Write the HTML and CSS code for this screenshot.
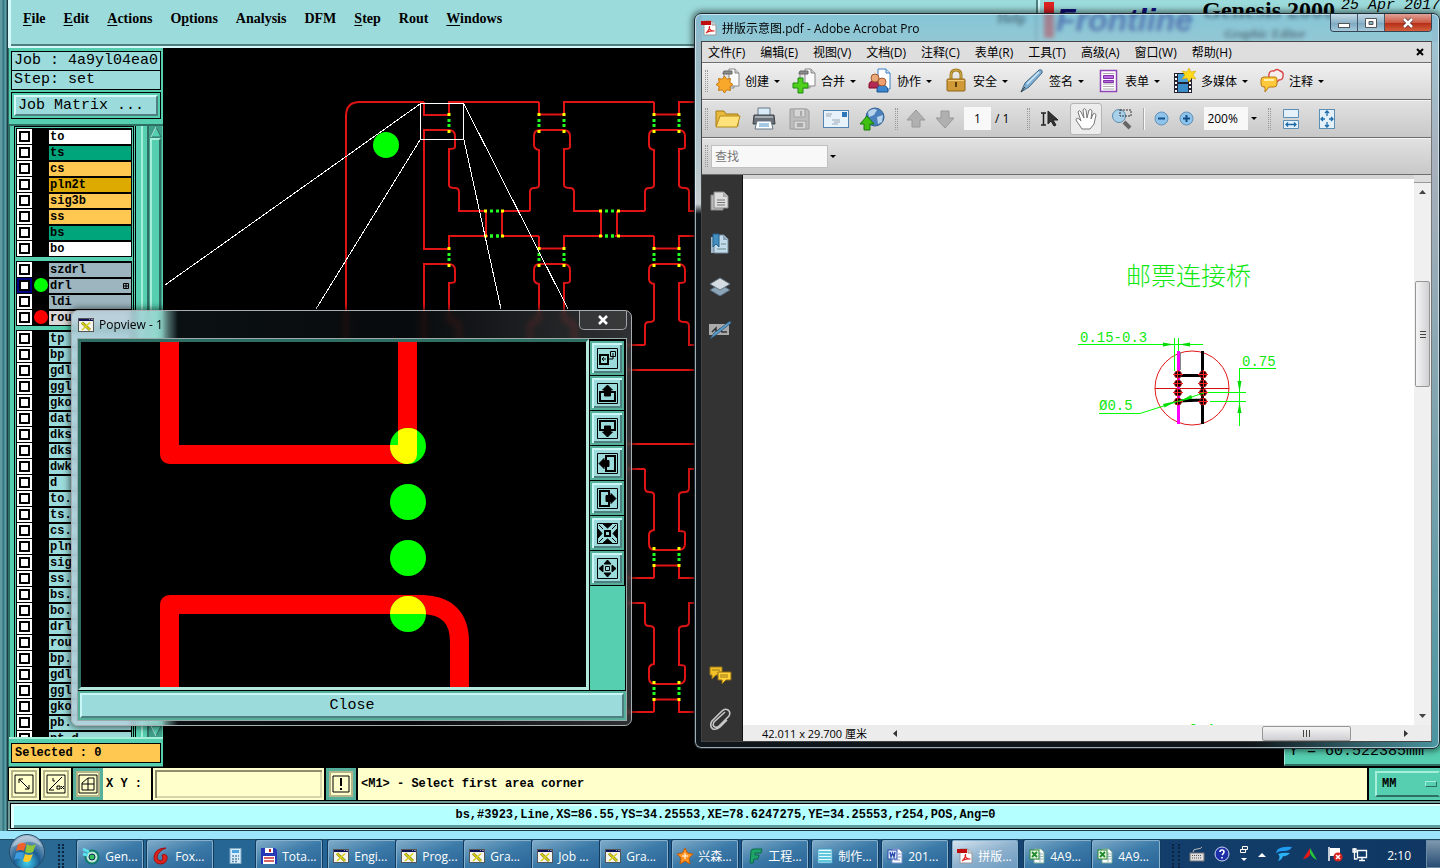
FILE: index.html
```html
<!DOCTYPE html>
<html lang="zh-CN">
<head>
  <meta charset="UTF-8" />
  <meta name="viewport" content="width=device-width, initial-scale=1.0"/>
  <title>Genesis 2000 - Graphic Editor</title>
  <link rel="stylesheet" href="styles.css">
</head>
<body>

  <!-- shared shapes -->
  <svg class="defs" width="0" height="0" aria-hidden="true">
    <symbol id="xwin" viewBox="0 0 16 14">
      <rect width="16" height="14" fill="#f4f4ec"/>
      <rect width="16" height="3" fill="#101058"/>
      <path d="M11 1h1M13 1h2" stroke="#fff"/>
      <rect x=".5" y=".5" width="15" height="13" fill="none" stroke="#555"/>
      <path d="M4 4.500L12 12" stroke="#8a8a10" stroke-width="3"/>
      <path d="M4 4.500L12 12M12 4.500L4 12" stroke="#d8d020" stroke-width="1.600"/>
    </symbol>
    <symbol id="pdf" viewBox="0 0 16 16">
      <path d="M3 1h8l4 4v10H3z" fill="#fff" stroke="#999"/>
      <path d="M11 1v4h4" fill="#ddd" stroke="#999"/>
      <path d="M0 1h10v4H0z" fill="#c00d0d"/>
      <path d="M5 13c2-1 4-5 3.500-7M8 7c.5 3 3 4 5.500 4M5.500 12.500c2-1.500 5-2 8-1.500" fill="none" stroke="#d22" stroke-width="1.200"/>
    </symbol>
    <symbol id="xls" viewBox="0 0 16 16">
      <path d="M5 1h7l3 3v11H5z" fill="#fff" stroke="#7a9"/>
      <path d="M7 6h7M7 8.500h7M7 11h7M11 4v10" stroke="#9bb"/>
      <rect x="1" y="2" width="9" height="9" fill="#e8f6e4" stroke="#2d8a36"/>
      <path d="M3 4l5 5M8 4L3 9" stroke="#1f8a2a" stroke-width="1.800"/>
    </symbol>
    <symbol id="sheets" viewBox="0 0 24 26">
      <path d="M8 5h10v15H8z" fill="#e4e4e4" stroke="#888"/>
      <path d="M13 1h6l4 4v13H13z" fill="#fafafa" stroke="#888"/>
      <path d="M19 1v4h4" fill="#ccc" stroke="#888"/>
      <path d="M7 5l1-2h8v3H7z" fill="#8c8c8c" stroke="#666"/>
    </symbol>
  </svg>

  <div class="desktop">

    <main class="genesis">
      <header class="gen-top">
        <nav class="gen-menu">
          <button><u>F</u>ile</button>
          <button><u>E</u>dit</button>
          <button><u>A</u>ctions</button>
          <button>O<u>p</u>tions</button>
          <button>Analysis</button>
          <button>DFM</button>
          <button><u>S</u>tep</button>
          <button>Rout</button>
          <button><u>W</u>indows</button>
          <button class="help">Help</button>
        </nav>
        <div class="brand">
          <div class="logo"><b></b>Frontline</div>
          <div class="product">Genesis 2000<small>Graphic Editor</small></div>
          <div class="date">25 Apr 2017</div>
        </div>
      </header>

      <div class="gen-body">
        <aside class="side">
          <div class="info">
            <div>Job : 4a9yl04ea0</div>
            <div>Step: set</div>
          </div>
          <div class="matrix"><button>Job Matrix ...</button></div>
          <div class="layer-area">
            <div class="layers">
              <div class="group">
                <label class="row"><input type="checkbox"><i></i><span class="white">to</span></label>
                <label class="row"><input type="checkbox"><i></i><span class="green">ts</span></label>
                <label class="row"><input type="checkbox"><i></i><span class="amber">cs</span></label>
                <label class="row"><input type="checkbox"><i></i><span class="gold">pln2t</span></label>
                <label class="row"><input type="checkbox"><i></i><span class="amber">sig3b</span></label>
                <label class="row"><input type="checkbox"><i></i><span class="amber">ss</span></label>
                <label class="row"><input type="checkbox"><i></i><span class="green">bs</span></label>
                <label class="row"><input type="checkbox"><i></i><span class="white">bo</span></label>
              </div>
              <div class="group">
                <label class="row"><input type="checkbox"><i></i><span class="steel">szdrl</span></label>
                <label class="row"><input type="checkbox" class="work"><i class="dot-green"></i><span class="steel">drl<svg width="6" height="6"><path d="M.5.5h5v5h-5zM3 0v6M0 3h6" fill="none" stroke="#000"/></svg></span></label>
                <label class="row"><input type="checkbox"><i></i><span class="steel">ldi</span></label>
                <label class="row"><input type="checkbox"><i class="dot-red"></i><span class="grey">rou</span></label>
              </div>
              <div class="group">
                <label class="row"><input type="checkbox"><i></i><span>tp</span></label>
                <label class="row"><input type="checkbox"><i></i><span>bp</span></label>
                <label class="row"><input type="checkbox"><i></i><span>gdl</span></label>
                <label class="row"><input type="checkbox"><i></i><span>ggl</span></label>
                <label class="row"><input type="checkbox"><i></i><span>gko</span></label>
                <label class="row"><input type="checkbox"><i></i><span>dat</span></label>
                <label class="row"><input type="checkbox"><i></i><span>dks</span></label>
                <label class="row"><input type="checkbox"><i></i><span>dks</span></label>
                <label class="row"><input type="checkbox"><i></i><span>dwk</span></label>
                <label class="row"><input type="checkbox"><i></i><span>d</span></label>
                <label class="row"><input type="checkbox"><i></i><span>to.</span></label>
                <label class="row"><input type="checkbox"><i></i><span>ts.</span></label>
                <label class="row"><input type="checkbox"><i></i><span>cs.</span></label>
                <label class="row"><input type="checkbox"><i></i><span>pln</span></label>
                <label class="row"><input type="checkbox"><i></i><span>sig</span></label>
                <label class="row"><input type="checkbox"><i></i><span>ss.</span></label>
                <label class="row"><input type="checkbox"><i></i><span>bs.</span></label>
                <label class="row"><input type="checkbox"><i></i><span>bo.</span></label>
                <label class="row"><input type="checkbox"><i></i><span>drl</span></label>
                <label class="row"><input type="checkbox"><i></i><span>rou</span></label>
                <label class="row"><input type="checkbox"><i></i><span>bp.</span></label>
                <label class="row"><input type="checkbox"><i></i><span>gdl</span></label>
                <label class="row"><input type="checkbox"><i></i><span>ggl</span></label>
                <label class="row"><input type="checkbox"><i></i><span>gko</span></label>
                <label class="row"><input type="checkbox"><i></i><span>pb.</span></label>
                <label class="row"><input type="checkbox"><i></i><span>pt.d</span></label>
              </div>
            </div>
            <div class="rail"></div>
            <div class="motif-scroll">
              <svg width="12" height="12"><path d="M6 1L11 11H1z" fill="#55cfb0" stroke="#2f6e63"/><path d="M6 1L1 11" stroke="#b5f5e4"/></svg>
              <div class="thumb"></div>
              <svg width="12" height="12"><path d="M6 11L11 1H1z" fill="#55cfb0" stroke="#2f6e63"/><path d="M1 1L6 11" stroke="#b5f5e4"/></svg>
            </div>
          </div>
          <div class="selected"><div>Selected : 0</div></div>
        </aside>

        <div class="canvas">
          <svg width="100%" height="100%" role="img" aria-label="PCB panel">
            <defs>
              <g id="col">
                <path d="M539 102V114.500H564V102H654M530 211V192Q530 188 534 188Q539 188 539 185V150Q534 149 534 145V136Q534 130 540 130H563Q570 130 570 136V147Q570 149 564 149V185Q564 188 570 188Q574 188 574 192V211H600M618 211H645M601 211V236M617 211V236"/>
                <path class="tab-end" d="M539 113v3M564 113v3M539 130v3M564 130v3"/>
                <path class="tab-hole" d="M539 119v3M564 119v3M539 124v3M564 124v3"/>
              </g>
              <g id="band">
                <path d="M424 102V115H449V102H539M424 249V130H448Q455 130 455 136V147Q455 149 449 149V185Q449 188 455 188Q459 188 459 192V211H486M503 211H530M486 211V236M502 211V236"/>
                <path class="tab-end" d="M449 113v3M449 130v3"/>
                <path class="tab-hole" d="M449 119v3M449 124v3"/>
                <use href="#col"/>
                <use href="#col" x="115"/>
                <use href="#col" x="230"/>
              </g>
              <g id="links">
                <path class="tab-end" d="M484 211h3M501 211h3M599 211h3M617 211h3M484 236h3M501 236h3M599 236h3M617 236h3"/>
                <path class="tab-hole" d="M490 211h3M496 211h3M605 211h3M611 211h3M490 236h3M496 236h3M605 236h3M611 236h3"/>
              </g>
              <g id="half">
                <use href="#band"/>
                <use href="#band" y="134"/>
                <use href="#links"/>
                <path d="M424 370H960"/>
              </g>
            </defs>
            <g transform="translate(-163 -48)">
              <g class="rout">
                <path d="M346 700V116Q346 102 360 102H424"/>
                <use href="#half"/>
                <use href="#half" transform="matrix(1 0 0 -1 0 814)"/>
              </g>
              <!-- bridge openings between the first and second row -->
              <path class="gap" d="M488 236h13M603 236h12"/>
              <path class="tab-hole" d="M490 236h3M496 236h3M605 236h3M611 236h3"/>
              <circle cx="386" cy="145" r="13" fill="#0f0"/>
              <path class="view" d="M420.500 103.500H463.500V139.500H420.500zM420 104L165 285M420 140L316 309M464 140L501 309M464 104L568 309"/>
            </g>
          </svg>
          <div class="coords">Y = 60.522385mm</div>
        </div>
      </div>

      <footer class="command">
        <button class="tool" aria-label="Area"><svg width="20" height="20" viewBox="0 0 20 20"><path d="M1 1h18v18H1zM5 5l10 10M5 9V5h4M11 15h4v-4" /></svg></button>
        <button class="tool" aria-label="Angle"><svg width="20" height="20" viewBox="0 0 20 20"><path d="M1 1h18v18H1zM3 16L16 3M3 16h5M7 4v3h2M11 12h3v3h-3zM18 12l-3 3M15 12l3 3"/></svg></button>
        <button class="tool on" aria-label="Grid"><svg width="20" height="20" viewBox="0 0 20 20"><path d="M1 1h18v18H1zM10 4h6v12H4v-7zM10 4v12M4 10h12"/></svg></button>
        <label class="xy" for="xy">X Y :</label>
        <input id="xy" type="text">
        <button class="tool on" aria-label="Alert"><svg width="20" height="20" viewBox="0 0 20 20"><path d="M2 2h16v16H2z"/><path d="M10 4v8M10 14v2" stroke-width="2"/></svg></button>
        <div class="message">&lt;M1&gt; - Select first area corner</div>
        <div class="unit"><button>MM<i></i></button></div>
      </footer>
      <div class="status"><div>bs,#3923,Line,XS=86.55,YS=34.25553,XE=78.6247275,YE=34.25553,r254,POS,Ang=0</div></div>
    </main>

    <section class="popview">
      <header class="pop-title">
        <svg width="16" height="14"><use href="#xwin"/></svg>
        <span>Popview - 1</span>
        <button aria-label="Close window"><svg width="12" height="10" viewBox="0 0 12 10"><path d="M2 1l8 8M10 1L2 9" stroke="#fff" stroke-width="2.500"/></svg></button>
      </header>
      <div class="pop-inner">
        <div class="pop-main">
          <div class="pop-canvas">
            <svg width="100%" height="100%" role="img" aria-label="Magnified rout and drill">
              <defs>
                <clipPath id="holes"><circle cx="408" cy="446" r="18"/><circle cx="408" cy="614" r="18"/></clipPath>
                <path id="trace" d="M169.500 340V454.500H407.500V340M169.500 700V604.500H423Q459.500 606 459.500 642V700"/>
              </defs>
              <g transform="translate(-81 -342)" fill="none" stroke-width="19" stroke-linejoin="round">
                <use href="#trace" stroke="#f00"/>
                <g fill="#0f0">
                  <circle cx="408" cy="446" r="18"/>
                  <circle cx="408" cy="502" r="18"/>
                  <circle cx="408" cy="558" r="18"/>
                  <circle cx="408" cy="614" r="18"/>
                </g>
                <g clip-path="url(#holes)"><use href="#trace" stroke="#ff0"/></g>
              </g>
            </svg>
          </div>
          <div class="pop-tools">
            <button aria-label="Zoom area"><svg viewBox="0 0 21 21"><path d="M.5.5h20v20H.5zM13.500 3.500h5v5h-5zM16 5v6h-4M9 11H5M7 9l-2 2 2 2"/><path d="M3 7h8v9H3z" stroke-width="2"/></svg></button>
            <button aria-label="Pan up"><svg viewBox="0 0 21 21"><path d="M.5.5h20v20H.5z"/><path d="M7 9H3v9h15V9h-4" stroke-width="2"/><path d="M10.500 2l5 5h-2v6h-6V7h-2z" fill="#000"/></svg></button>
            <button aria-label="Pan down"><svg viewBox="0 0 21 21"><path d="M.5.5h20v20H.5z"/><path d="M7 12H3V3h15v9h-4" stroke-width="2"/><path d="M10.500 19l5-5h-2V8h-6v6h-2z" fill="#000"/></svg></button>
            <button aria-label="Pan left"><svg viewBox="0 0 21 21"><path d="M.5.5h20v20H.5z"/><path d="M9 7V3h9v15H9v-4" stroke-width="2"/><path d="M2 10.500l5-5v2h5v6H7v2z" fill="#000"/></svg></button>
            <button aria-label="Pan right"><svg viewBox="0 0 21 21"><path d="M.5.5h20v20H.5z"/><path d="M12 7V3H3v15h9v-4" stroke-width="2"/><path d="M19 10.500l-5-5v2H9v6h5v2z" fill="#000"/></svg></button>
            <button aria-label="Zoom in"><svg viewBox="0 0 21 21"><path d="M.5.5h20v20H.5zM2 2l4 4M19 2l-4 4M2 19l4-4M19 19l-4-4"/><path d="M8 8h5v5H8z" stroke-width="2"/><path d="M6 1h9l-4.500 4zM6 20h9l-4.500-4zM1 6v9l4-4.500zM20 6v9l-4-4.500z" fill="#000"/></svg></button>
            <button aria-label="Zoom out"><svg viewBox="0 0 21 21"><path d="M.5.5h20v20H.5z"/><path d="M8.500 8.500h4v4h-4z"/><path d="M7 6h7l-3.500-4zM7 15h7l-3.500 4zM6 7v7l-4-3.500zM15 7v7l4-3.500z" fill="#000"/></svg></button>
          </div>
        </div>
        <div class="pop-close"><button>Close</button></div>
      </div>
    </section>

    <section class="acrobat">
      <header class="acro-title">
        <svg width="16" height="16"><use href="#pdf"/></svg>
        <h1>拼版示意图.pdf - Adobe Acrobat Pro</h1>
        <div class="caption">
          <button aria-label="Minimize"><svg width="14" height="12"><rect x="1.500" y="6.500" width="11" height="4" fill="#fff" stroke="#555"/></svg></button>
          <button aria-label="Restore"><svg width="14" height="12"><path d="M1.500 1.500h11v9h-11zM5 4.500h4v3H5z" fill="#fff" fill-rule="evenodd" stroke="#555"/></svg></button>
          <button class="red" aria-label="Close"><svg width="14" height="12"><path d="M3 2l8 8M11 2l-8 8" stroke="#533" stroke-width="4"/><path d="M3 2l8 8M11 2l-8 8" stroke="#fff" stroke-width="2.500"/></svg></button>
        </div>
      </header>
      <div class="acro-inner">
        <nav class="acro-menu">
          <button>文件(F)</button>
          <button>编辑(E)</button>
          <button>视图(V)</button>
          <button>文档(D)</button>
          <button>注释(C)</button>
          <button>表单(R)</button>
          <button>工具(T)</button>
          <button>高级(A)</button>
          <button>窗口(W)</button>
          <button>帮助(H)</button>
          <button class="doc-close" aria-label="Close document"><svg width="8" height="8"><path d="M1 1l6 6M7 1L1 7" stroke="#000" stroke-width="2"/></svg></button>
        </nav>

        <div class="bar tasks">
          <i class="grip"></i>
          <button><svg width="24" height="26" viewBox="0 0 24 26"><use href="#sheets"/><path d="M8.500 8l2.200 3.200 3.800-.7-.7 3.800L17 16.500l-3.200 2.200.7 3.800-3.800-.7L8.500 25l-2.200-3.200-3.800.7.7-3.800L0 16.500l3.200-2.200-.7-3.800 3.800.7z" fill="#f8a92c" stroke="#c87a10"/></svg>创建<b></b></button>
          <button><svg width="24" height="26" viewBox="0 0 24 26"><use href="#sheets"/><path d="M6 10h5v5h5v5h-5v5H6v-5H1v-5h5z" fill="#4fd01c" stroke="#1f8a10"/></svg>合并<b></b></button>
          <button><svg width="24" height="26" viewBox="0 0 24 26"><path d="M10 1h8l4 4v16H10z" fill="#fff" stroke="#3b7fc4"/><path d="M18 1v4h4" fill="#cfe2f4" stroke="#3b7fc4"/><path d="M1 17q0-4 5-4t5 4v3H1z" fill="#b02a55" stroke="#802"/><circle cx="7" cy="10" r="4" fill="#e8a878" stroke="#a05a30"/><path d="M9 22q0-5 5-5t6 5v2H9z" fill="#3d86d0" stroke="#1d5090"/><circle cx="14" cy="14" r="4" fill="#f0a070" stroke="#a05a30"/></svg>协作<b></b></button>
          <button><svg width="24" height="26" viewBox="0 0 24 26"><path d="M7 12V7q0-5 5-5t5 5v5" fill="none" stroke="#a07a20" stroke-width="3"/><path d="M7 12V7q0-5 5-5t5 5v5" fill="none" stroke="#d8b450"/><rect x="3" y="11" width="18" height="12" rx="1" fill="#d09a38" stroke="#8f6512"/><path d="M4 12.500h16" stroke="#f1cc78"/><path d="M12 14v5" stroke="#5c3d08" stroke-width="2"/></svg>安全<b></b></button>
          <button><svg width="24" height="26" viewBox="0 0 24 26"><path d="M1 24L5 15 19 2q4-1 3 3L9 19z" fill="#7fb0d8" stroke="#44687f"/><path d="M7 16L19 4" stroke="#d5ebfa" stroke-width="1.500"/><path d="M1 24l4-5" stroke="#333"/></svg>签名<b></b></button>
          <button><svg width="24" height="26" viewBox="0 0 24 26"><rect x="4.500" y="2.500" width="16" height="21" fill="#fff" stroke="#8f45b8" stroke-width="1.500"/><path d="M7 5.500h11M7 16h11M7 18.500h11M7 21h11" stroke="#aaa"/><path d="M7.500 7.500h10v3h-10zM7.500 12.500h10v2h-10z" fill="#b868e0" stroke="#8030a8"/></svg>表单<b></b></button>
          <button><svg width="24" height="26" viewBox="0 0 24 26"><rect x="2" y="5" width="18" height="20" fill="#223"/><rect x="6" y="6" width="10" height="8" fill="#4aa0d8"/><rect x="6" y="16" width="10" height="8" fill="#3a8cc8"/><path d="M4 6v18M18 6v18" stroke="#fff" stroke-width="2" stroke-dasharray="2 2"/><path d="M17 0l2 4 5-1-3 4 3 4-5-1-2 4-2-4-5 1 3-4-3-4 5 1z" fill="#ffd91c" stroke="#d8a800" stroke-width=".6"/></svg>多媒体<b></b></button>
          <button><svg width="24" height="26" viewBox="0 0 24 26"><path d="M9 6q1-4 5-3 3-3 6 0 4 1 3 5 0 4-4 4l-3 3 0-3h-4q-4-2-3-6z" fill="#f6eeee" stroke="#d84040" stroke-width="1.300"/><path d="M4 9h11q2 0 2 3v4q0 3-3 3H9l-4 5v-5H4q-3 0-3-3v-4q0-3 3-3z" fill="#ffc83a" stroke="#b87a10"/><path d="M4 12h10" stroke="#fff0b0" stroke-width="2"/></svg>注释<b></b></button>
        </div>

        <div class="bar tools">
          <i class="grip"></i>
          <div class="files">
            <button aria-label="打开"><svg width="26" height="24" viewBox="0 0 26 24"><path d="M1 19V4h8l2 3h12v12z" fill="#e8b93a" stroke="#a67c14"/><path d="M1 20L5 9h20l-3 11z" fill="#ffe27a" stroke="#b88a1a"/></svg></button>
            <button aria-label="打印"><svg width="26" height="24" viewBox="0 0 26 24"><path d="M7 1h12v8H7z" fill="#d8edf8" stroke="#678"/><path d="M3 8h20l1 9H2z" fill="#6a6f76" stroke="#3d4247"/><path d="M4 10h18" stroke="#a6acb3" stroke-width="2"/><path d="M6 14h14l2 8H4z" fill="#fff" stroke="#678"/><path d="M8 17h10M8 19h10" stroke="#4a90c8"/></svg></button>
            <button aria-label="保存"><svg width="26" height="24" viewBox="0 0 26 24"><path d="M3 2h17l2 2v18H3z" fill="#bdbdbd" stroke="#9c9c9c"/><path d="M7 2h11v8H7zM7 14h12v8H7z" fill="#d6d6d6" stroke="#a2a2a2"/><path d="M14 4v5M10 17h6M10 19h6" stroke="#999" stroke-width="1.500"/></svg></button>
            <button aria-label="电子邮件"><svg width="26" height="24" viewBox="0 0 26 24"><rect x=".5" y="3.500" width="25" height="17" fill="#e8f2fa" stroke="#5585ae"/><rect x="19" y="5" width="5" height="5" fill="#2c78b8"/><path d="M3 7h6M3 9h5M9 13h8M11 15h6M9 17h6" stroke="#99a9b5"/></svg></button>
            <button aria-label="上载"><svg width="26" height="24" viewBox="0 0 26 24"><circle cx="16" cy="10" r="9" fill="#4a80bc" stroke="#34608f"/><path d="M9 5q5-5 9-2l-3 5-5 2zM18 10l6-2-1 7-4 2z" fill="#b8d4ec"/><path d="M8 9l7 8h-4v6H5v-6H1z" fill="#3fc010" stroke="#187810"/></svg></button>
          </div>
          <i class="grip"></i>
          <div class="pages">
            <button aria-label="上一页"><svg width="20" height="20"><path d="M10 1l9 10h-5v7H6v-7H1z" fill="#b0b0b0" stroke="#999"/></svg></button>
            <button aria-label="下一页"><svg width="20" height="20"><path d="M10 19l9-10h-5V2H6v7H1z" fill="#b0b0b0" stroke="#999"/></svg></button>
            <input type="text" value="1" aria-label="页码"><span>/ 1</span>
          </div>
          <i class="grip"></i>
          <div class="select">
            <button aria-label="选择"><svg width="20" height="18" viewBox="0 0 20 18"><path d="M1 3h5M1 15h5M3.500 3v12" stroke="#222" stroke-width="1.500"/><path d="M8 1l10 9h-5l3 5-2 1-3-5-3 3z" fill="#333" stroke="#222"/></svg></button>
            <button class="active" aria-label="手形"><svg width="24" height="24" viewBox="0 0 24 24"><path d="M8 22L2 13q0-3 3-1l2 2-3-9q1-3 3 0l3 6-1-8q1-3 3 0l1 8 2-8q2-2 3 1l-1 8 2-5q2-2 3 1l-2 9-4 5z" fill="#fff" stroke="#777"/></svg></button>
            <button aria-label="选框缩放"><svg width="22" height="22" viewBox="0 0 22 22"><circle cx="8" cy="8" r="6.500" fill="#a8d0ea" stroke="#5b8bad"/><path d="M13 14l6 6" stroke="#666" stroke-width="4"/><path d="M9 2h11v6H9z" fill="none" stroke="#333" stroke-dasharray="2 1"/></svg></button>
          </div>
          <i class="line"></i>
          <div class="zoom">
            <button aria-label="缩小"><svg width="15" height="15"><circle cx="7.500" cy="7.500" r="6.500" fill="#8ec4ec" stroke="#6591b5"/><path d="M4 7.500h7" stroke="#135089" stroke-width="2"/></svg></button>
            <button aria-label="放大"><svg width="15" height="15"><circle cx="7.500" cy="7.500" r="6.500" fill="#8ec4ec" stroke="#6591b5"/><path d="M4 7.500h7M7.500 4v7" stroke="#135089" stroke-width="2"/></svg></button>
            <select aria-label="缩放比例"><option>200%</option></select>
          </div>
          <b></b>
          <i class="grip"></i>
          <div class="files">
            <button aria-label="适合宽度"><svg width="18" height="22" viewBox="0 0 18 22"><path d="M1.500 1.500h15v8h-15zM1.500 12.500h15v8h-15z" fill="#e4f1fa" stroke="#5d8fb5"/><path d="M4 16.500h10M6 14.500l-2 2 2 2M12 14.500l2 2-2 2" fill="none" stroke="#1d6caa" stroke-width="1.300"/></svg></button>
            <button aria-label="适合页面"><svg width="18" height="22" viewBox="0 0 18 22"><rect x="1.500" y="1.500" width="15" height="19" fill="#e4f1fa" stroke="#5d8fb5"/><path d="M9 3v5M9 14v5M3 11h4M11 11h4M7 5l2-2 2 2M7 17l2 2 2-2M5 9l-2 2 2 2M13 9l2 2-2 2" fill="none" stroke="#1d6caa" stroke-width="1.300"/></svg></button>
          </div>
        </div>

        <div class="bar find">
          <i class="grip"></i>
          <input type="text" placeholder="查找" aria-label="查找"><b></b>
        </div>

        <div class="acro-body">
          <aside class="acro-side">
            <button aria-label="页面"><svg width="22" height="22" viewBox="0 0 22 22"><path d="M2 5h12v15H2z" fill="#bbb" stroke="#888"/><path d="M5 2h10l4 4v12H5z" fill="#ddd" stroke="#888"/><path d="M14 2v5h5" fill="#aaa"/><path d="M8 10h8M8 12.500h8M8 15h8" stroke="#777"/></svg></button>
            <button aria-label="书签"><svg width="22" height="22" viewBox="0 0 22 22"><path d="M2 4h12v16H2z" fill="#9cb8c9"/><path d="M5 2h10l4 4v14H5z" fill="#c2dcec" stroke="#74889a"/><path d="M14 2v5h5" fill="#86a0b4"/><path d="M4 1h6v13l-3-3-3 3z" fill="#4390c0" stroke="#245f8a"/><path d="M12 11h5M8 16h9" stroke="#688"/></svg></button>
            <button aria-label="图层"><svg width="22" height="22" viewBox="0 0 22 22"><path d="M11 8l10 6-10 6-10-6z" fill="#8ba5b6" stroke="#536b7c"/><path d="M11 2l10 6-10 6L1 8z" fill="#d5dde2" stroke="#697b88"/></svg></button>
            <button aria-label="签名"><svg width="24" height="22" viewBox="0 0 24 22"><rect x="1" y="5" width="20" height="11" fill="#aaa"/><path d="M4 13l4-4v4l4-3 2 3h5" fill="none" stroke="#333" stroke-width="1.500"/><path d="M2 20l4-6L22 2l1 2L8 16z" fill="#5c9cc8" stroke="#28557a" stroke-width=".7"/></svg></button>
            <span></span>
            <button aria-label="注释"><svg width="24" height="22" viewBox="0 0 24 22"><path d="M2 3h12v8H8l-4 4v-4H2z" fill="#f0c02a" stroke="#9c7612"/><path d="M10 8h13v8h-5l-4 4v-4h-4z" fill="#ffd23a" stroke="#8c6810"/><path d="M4 6h8M12 11h8M12 13h8" stroke="#9c7612"/></svg></button>
            <button aria-label="附件"><svg width="24" height="24" viewBox="0 0 24 24"><path d="M17 5L6 15q-2 4 1 5 2 1 4-1L21 9q2-4-1-6-3-2-6 1L4 14q-3 5 1 8 4 1 7-2l7-7" fill="none" stroke="#c8c8c8" stroke-width="1.600"/></svg></button>
          </aside>
          <div class="doc">
            <div class="doc-row">
              <div class="page">
                <svg width="100%" height="100%" role="img" aria-label="邮票连接桥">
                  <g transform="translate(-743 -175)" fill="none" stroke="#0f0">
                    <g fill="#10e810" stroke="none" class="dims">
                      <text x="1126" y="285" class="dwg-title">邮票连接桥</text>
                      <text x="1080" y="342">0.15-0.3</text>
                      <text x="1242" y="366">0.75</text>
                      <text x="1099" y="410">Ø0.5</text>
                      <text x="1189" y="734">2.4</text>
                    </g>
                    <circle cx="1192" cy="388" r="37" stroke="#e01818"/>
                    <path d="M1155 388.500h74" stroke="#d01010"/>
                    <path d="M1178.500 351v73" stroke="#f0f" stroke-width="3"/>
                    <path d="M1202.500 351v73M1178 375.500h24M1178 401l24-1" stroke="#000" stroke-width="3"/>
                    <g fill="#000" stroke="#a01010">
                      <circle cx="1178" cy="374.500" r="3.500"/><circle cx="1178" cy="383.500" r="3.500"/><circle cx="1178" cy="392.500" r="3.500"/><circle cx="1178" cy="401.500" r="3.500"/>
                      <circle cx="1203" cy="374.500" r="3.500"/><circle cx="1203" cy="383.500" r="3.500"/><circle cx="1203" cy="392.500" r="3.500"/><circle cx="1203" cy="401.500" r="3.500"/>
                    </g>
                    <path d="M1173 374.500h10M1173 383.500h10M1173 392.500h10M1173 401.500h10M1198 374.500h10M1198 383.500h10M1198 392.500h10M1198 401.500h10M1177.500 370v9M1177.500 380v7M1177.500 389v7M1177.500 398v7M1203.500 370v9M1203.500 380v7M1203.500 389v7M1203.500 398v7" stroke="#f22"/>
                    <path d="M1078 344.500h125M1174.500 338v33M1178.500 338v13M1099 413.500h41L1204 393M1208 392.500h38M1210 401.500h36M1276 368.500h-36M1239.500 368v58"/>
                    <path d="M1163 342.500v4l11-2zM1190 342.500v4l-11-2zM1163 404l1.500 3.500 12-6.500zM1191 395l1.500 3.500-13 3zM1237.500 381h4l-2 11zM1237.500 413h4l-2-11z" fill="#0d0" stroke="none"/>
                    <path d="M1180.500 352v18" stroke="#888"/>
                  </g>
                </svg>
              </div>
              <div class="vscroll">
                <i class="split"></i>
                <svg width="7" height="4"><path d="M0 4h7L3.500 0z" fill="#444"/></svg>
                <div class="thumb"><svg width="8" height="8"><path d="M1 1.500h6M1 4.500h6M1 7.500h6" stroke="#444"/></svg></div>
                <svg width="7" height="4"><path d="M0 0h7L3.500 4z" fill="#444"/></svg>
              </div>
            </div>
            <div class="hscroll">
              <span>42.011 x 29.700 厘米</span>
              <svg width="4" height="7"><path d="M4 0v7L0 3.500z" fill="#333"/></svg>
              <div class="track"><div class="thumb"><svg width="9" height="7"><path d="M1.500 0v7M4.500 0v7M7.500 0v7" stroke="#444"/></svg></div></div>
              <svg width="4" height="7"><path d="M0 0v7l4-3.500z" fill="#333"/></svg>
            </div>
          </div>
        </div>
      </div>
    </section>

    <footer class="taskbar">
      <button class="start" aria-label="开始"><svg width="38" height="36" viewBox="0 0 38 36">
        <defs><radialGradient id="orb" cx=".5" cy=".8" r=".8"><stop offset="0" stop-color="#3fd0f0"/><stop offset=".45" stop-color="#1b5c92"/><stop offset="1" stop-color="#a9c0d0"/></radialGradient></defs>
        <circle cx="19" cy="18" r="17.500" fill="url(#orb)" stroke="#274a68"/>
        <path d="M10 10q4-3 8 0l-2 7q-4-2-8 0z" fill="#f0602a"/><path d="M19 10q4 3 9 0l-3 8q-4 2-8 0z" fill="#8dc63a"/><path d="M8 19q4-2 8 0l-2 7q-4-3-8 0z" fill="#3d9be0"/><path d="M17 20q4 2 8 0l-3 7q-4 2-7 0z" fill="#fdcb2a"/>
        <path d="M4 13Q8 3 19 2q11 1 15 11-8-6-15-5T4 13z" fill="#fff" opacity=".35"/></svg></button>
      <i class="dots"></i>
      <div class="apps">
        <button><svg width="18" height="18" viewBox="0 0 18 18"><circle cx="10" cy="10" r="6.500" fill="#bfe8d8" stroke="#0c7a68" stroke-width="2"/><circle cx="10" cy="10" r="3" fill="#35c060" stroke="#125"/><path d="M1 2l6 3M1 7l5 1" stroke="#5ce0f0" stroke-width="3"/></svg>Gen...</button>
        <button><svg width="18" height="18" viewBox="0 0 18 18"><path d="M14 1Q3 1 2 10q0 7 7 7 7-1 6-8-2-3-5-1 2 5-1 6-4 0-4-4 1-6 9-9z" fill="#e0231c" stroke="#a01010"/></svg>Fox...</button>
        <button class="pinned" aria-label="计算器"><svg width="14" height="16" viewBox="0 0 14 16"><rect x="2" y=".5" width="11" height="15" fill="#d8ecfa" stroke="#7ea7c4"/><rect x="4" y="2" width="7" height="3" fill="#4aa4e0"/><path d="M4 8h2M7 8h2M10 8h1M4 11h2M7 11h2M10 11h1M4 13.500h2M7 13.500h2" stroke="#5a86a8" stroke-width="1.500"/></svg></button>
        <button><svg width="16" height="16" viewBox="0 0 16 16"><path d="M0 0h14l2 2v14H0z" fill="#2438b8"/><path d="M4 0h8v5H4z" fill="#fff"/><path d="M8 1h2v3H8z" fill="#c22"/><path d="M2 8h12v8H2z" fill="#fff"/><path d="M3 10h10M3 13h10" stroke="#c33" stroke-width="1.500"/></svg>Tota...</button>
        <div class="stack">
          <button><svg width="16" height="14"><use href="#xwin"/></svg>Engi...</button>
          <button><svg width="16" height="14"><use href="#xwin"/></svg>Prog...</button>
          <button><svg width="16" height="14"><use href="#xwin"/></svg>Gra...</button>
          <button><svg width="16" height="14"><use href="#xwin"/></svg>Job ...</button>
          <button><svg width="16" height="14"><use href="#xwin"/></svg>Gra...</button>
        </div>
        <button><svg width="16" height="16" viewBox="0 0 16 16"><path d="M8 0l2.500 5 5.500 1-4 4 1 6-5-3-5 3 1-6-4-4 5.500-1z" fill="#ff9420" stroke="#c05a08"/><path d="M5 8h6M8 5v6" stroke="#fff"/></svg>兴森...</button>
        <button><svg width="16" height="16" viewBox="0 0 16 16"><path d="M3 15L4 3q0-2 3-2h8l-1 4H8v2h4l-1 4H7l-1 4z" fill="#1fa468" stroke="#0b6a48"/></svg>工程...</button>
        <button><svg width="16" height="16" viewBox="0 0 16 16"><rect x="1" y="1" width="14" height="14" fill="#e4faff" stroke="#3b9cc4"/><path d="M2 4h12M2 7h12M2 10h12M2 13h12" stroke="#35b8d4" stroke-width="1.500"/></svg>制作...</button>
        <button><svg width="16" height="16" viewBox="0 0 16 16"><path d="M5 1h7l3 3v11H5z" fill="#fff" stroke="#7a92c8"/><path d="M7 12h6M11 6h3M11 9h3" stroke="#89c"/><rect x="1" y="2" width="9" height="9" fill="#dfe8fb" stroke="#2b4fae"/><path d="M3 4l1 5 1.500-4L7 9l1-5" fill="none" stroke="#2146a8" stroke-width="1.300"/></svg>201...</button>
        <button class="current"><svg width="16" height="16"><use href="#pdf"/></svg>拼版...</button>
        <div class="stack">
          <button><svg width="16" height="16"><use href="#xls"/></svg>4A9...</button>
          <button><svg width="16" height="16"><use href="#xls"/></svg>4A9...</button>
        </div>
      </div>
      <div class="tray">
        <i class="dots"></i>
        <svg width="16" height="16" viewBox="0 0 16 16"><rect x="1" y="7" width="14" height="8" fill="#ddd" stroke="#777"/><path d="M3 9.500h10M3 12h10" stroke="#555" stroke-dasharray="1 1"/><path d="M4 6q0-3 4-3t5-2" fill="none" stroke="#bbb"/></svg>
        <svg width="16" height="16" viewBox="0 0 16 16"><circle cx="8" cy="8" r="7" fill="#1c2fa8" stroke="#cdd8f0"/><path d="M6 6q0-2 2-2t2 2q0 1-2 3M8 11v1.500" fill="none" stroke="#fff" stroke-width="1.600"/></svg>
        <svg width="10" height="18" viewBox="0 0 10 18"><path d="M3.500 1.500h5v3h-5zM1.500 4.500h5v3h-5z" fill="#246" stroke="#fff"/><path d="M2 13h6l-3 3z" fill="#fff"/></svg>
        <svg width="8" height="5"><path d="M0 5l4-4 4 4z" fill="#fff"/></svg>
        <svg width="18" height="16" viewBox="0 0 18 16"><path d="M3 3q5-3 14-2-2 4-8 4-7 0-8 3 0-3 2-5z" fill="#1f9cf0"/><path d="M3 8q5-2 12-1-3 4-7 3-1 4-5 5 3-4 0-7z" fill="#2ab4f5"/></svg>
        <svg width="16" height="14" viewBox="0 0 16 14"><path d="M8 1L1 12q4 0 7-4z" fill="#e01818"/><path d="M8 1l7 12q-5-2-7-7z" fill="#28c838"/></svg>
        <svg width="16" height="16" viewBox="0 0 16 16"><path d="M2 1v14" stroke="#fff" stroke-width="1.500"/><path d="M3 2h10v8H3z" fill="#fff"/><circle cx="11" cy="11" r="4.500" fill="#d8201c"/><path d="M9 9l4 4M13 9l-4 4" stroke="#fff" stroke-width="1.500"/></svg>
        <svg width="16" height="16" viewBox="0 0 16 16"><path d="M5.500 4.500h9v7h-9zM7 14.500h6M10 12v2M2.500 2v4M1 3h3v3H1zM2.500 6v7h3" fill="none" stroke="#fff" stroke-width="1.300"/></svg>
        <time>2:10</time>
        <button class="peek" aria-label="显示桌面"></button>
      </div>
    </footer>
  </div>

</body>
</html>
```
FILE: styles.css
```css
* {
  box-sizing: border-box;
}

body {
  margin: 0;
  height: 100vh;
  overflow: hidden;
  background: #0a3a62;
  font-family: "Open Sans", "Noto Sans CJK SC", sans-serif;
  font-size: 12px;
  color: #000;
}

button, input, select {
  margin: 0;
  padding: 0;
  border: 0;
  border-radius: 0;
  background: none;
  font: inherit;
  color: inherit;
}

svg {
  display: block;
  flex: none;
}

.defs {
  position: absolute;
}

.desktop {
  position: relative;
  display: flex;
  flex-direction: column;
  height: 100vh;
}

/* ---------- Genesis main window ---------- */

.genesis {
  flex: 1;
  min-height: 0;
  display: flex;
  flex-direction: column;
  padding: 0 0 9px 8px;
  background: linear-gradient(to right, #5f9ba2 0 2px, #2e6e7a 3px, #65adb5 6px, #1c3b42 7px);
  font-family: "Liberation Mono", monospace;
  font-weight: bold;
  border-bottom: 1px solid #1e4960;
  box-shadow: inset 0 -8px #9be6fa;
}

.gen-top {
  display: flex;
  height: 48px;
  background: #9cdbdb;
}

.gen-menu {
  flex: 1;
  display: flex;
  align-items: flex-start;
  gap: 18px;
  padding: 11px 12px;
  border: 2px solid #d5f8f8;
  border-width: 0 2px 2px 3px;
  box-shadow: inset -2px -2px #4f8080;
  font: bold 14px/16px "Liberation Serif", serif;
}

.gen-menu u {
  text-underline-offset: 2px;
}

.gen-menu .help {
  margin-left: auto;
}

.brand {
  display: flex;
  gap: 6px;
  width: 400px;
  padding: 0 0 0 4px;
  white-space: nowrap;
}

.logo {
  width: 155px;
  padding-top: 4px;
  font: italic bold 32px/32px "Liberation Sans", sans-serif;
  color: #10107c;
}

.logo b {
  margin-right: 2px;
  border-left: 10px solid #d22;
}

.product {
  font: bold 24px/20px "Liberation Serif", serif;
}

.product small {
  display: block;
  padding: 6px 0 0 22px;
  font: italic bold 13px/16px "Liberation Serif", serif;
}

.date {
  font: italic 15px/12px "Liberation Mono", monospace;
}

.gen-body {
  flex: 1;
  min-height: 0;
  display: flex;
}

.side {
  width: 155px;
  display: flex;
  flex-direction: column;
  background: #55cfb0;
  border-left: 1px solid #2f6e63;
}

.info {
  margin: 3px 2px 2px 2px;
  border: 1px solid #000;
  background: #9cdbdb;
  font-size: 15px;
  line-height: 18px;
  font-weight: normal;
  white-space: nowrap;
}

.info div {
  padding-left: 2px;
}

.info div + div {
  border-top: 1px solid #000;
}

.matrix {
  margin: 0 2px;
  padding: 2px;
  border: 1px solid #000;
}

.matrix button {
  width: 100%;
  height: 21px;
  padding-left: 2px;
  text-align: left;
  font-size: 15px;
  font-weight: normal;
  line-height: 16px;
  background: #9cdbdb;
  border: 2px solid;
  border-color: #d5f8f8 #4f8080 #4f8080 #d5f8f8;
}

.layer-area {
  flex: 1;
  min-height: 0;
  display: flex;
  margin-top: 5px;
  padding-left: 4px;
  background: #55cfb0;
  border-top: 2px solid #2f6e63;
  border-left: 1px solid #2f6e63;
}

.layers {
  width: 120px;
  overflow: hidden;
  border: 1px solid #000;
  border-bottom: 0;
  padding: 1px;
}

.group {
  padding: 1px 1px 0 1px;
  margin-bottom: 4px;
  background: #000;
}

.row {
  display: flex;
  height: 16px;
}

.row input {
  appearance: none;
  width: 15px;
  height: 15px;
  border: 2px solid #fff;
  box-shadow: inset 0 0 0 2px #000;
  background: #fff;
}

.row .work {
  border-color: #000080;
}

.row i {
  width: 14px;
  height: 14px;
  margin: 0 1px 0 2px;
  border-radius: 50%;
}

.row .dot-green {
  background: #0f0;
}

.row .dot-red {
  background: #f00;
}

.row span {
  flex: 1;
  display: flex;
  align-items: center;
  justify-content: space-between;
  height: 14px;
  margin-top: 1px;
  padding: 0 2px 0 1px;
  background: #9cdbdb;
  line-height: 14px;
  white-space: nowrap;
}

.row .white { background: #fff; }
.row .green { background: #00a57b; }
.row .amber { background: #ffc850; }
.row .gold { background: #dcaa00; }
.row .steel { background: #9cb5be; }
.row .grey { background: #d9d9d9; }

.rail {
  width: 8px;
  margin-left: 1px;
  border-left: 1px solid #000;
  border-right: 2px solid #a5eeda;
}

.motif-scroll {
  display: flex;
  flex-direction: column;
  width: 15px;
  margin-left: 4px;
  padding-left: 1px;
  background: #3f9f88;
  border-left: 2px solid #2f6e63;
}

.motif-scroll .thumb {
  flex: 1;
  width: 11px;
  background: #55cfb0;
  border: 2px solid;
  border-color: #a5eeda #2f6e63 #2f6e63 #a5eeda;
}

.selected {
  padding: 4px 2px 3px;
  border-top: 2px solid #a5eeda;
  border-bottom: 1px solid #2f6e63;
}

.selected div {
  height: 20px;
  padding-left: 3px;
  border: 1px solid #000;
  background: #ffc850;
  line-height: 18px;
}

.canvas {
  flex: 1;
  position: relative;
  min-width: 0;
  overflow: hidden;
  background: #000;
}

.rout {
  fill: none;
  stroke: #e01414;
  stroke-width: 2;
}

.tab-end {
  stroke: #ff0;
  stroke-width: 3;
}

.tab-hole {
  stroke: #2f2;
  stroke-width: 3;
}

.gap {
  stroke: #000;
  stroke-width: 2;
}

.view {
  fill: none;
  stroke: #fff;
  shape-rendering: crispEdges;
}

.coords {
  position: absolute;
  right: 0;
  bottom: 1px;
  width: 156px;
  height: 28px;
  padding-left: 4px;
  background: #55cfb0;
  border-bottom: 2px solid #2f6e63;
  border-left: 1px solid #a5eeda;
  font-size: 15px;
  font-weight: normal;
  line-height: 28px;
}

.command {
  display: flex;
  height: 34px;
  padding: 1px 0 1px 1px;
  background: #000;
  gap: 2px;
}

.tool {
  display: flex;
  align-items: center;
  justify-content: center;
  width: 30px;
  background: #ffffcc;
  border: 2px solid #ffffcc;
  box-shadow: inset 0 0 0 2px #b5b58c;
}

.tool.on {
  border: 3px solid #55b09b;
}

.tool svg {
  fill: none;
  stroke: #000;
}

.xy {
  width: 48px;
  margin-left: -2px;
  padding-left: 3px;
  background: #ffffcc;
  line-height: 32px;
}

.command input {
  width: 171px;
  padding-left: 6px;
  background: #ffffcc;
  border: 2px solid #ffffcc;
  box-shadow: inset 2px 2px #8f8f70, inset -2px -2px #d5d5aa;
}

.message {
  flex: 1;
  padding-left: 3px;
  background: #ffffcc;
  line-height: 32px;
}

.unit {
  width: 71px;
  padding: 3px 0 3px 6px;
  background: #55cfb0;
}

.unit button {
  display: flex;
  align-items: center;
  justify-content: space-between;
  width: 100%;
  height: 26px;
  padding: 0 1px 0 5px;
  border: 2px solid;
  border-color: #a5eeda transparent #2f6e63 #a5eeda;
}

.unit i {
  width: 12px;
  height: 6px;
  border: 1px solid;
  border-color: #a5eeda #2f6e63 #2f6e63 #a5eeda;
}

.status {
  padding: 2px 0 0 2px;
  background: #6f9a98;
  border-bottom: 1px solid #d5ffff;
}

.status div {
  height: 26px;
  background: #b4ffff;
  border: 1px solid #000;
  border-right: 0;
  box-shadow: inset 3px 2px #e0ffff, inset 0 -3px #5f9b9b;
  line-height: 23px;
  text-align: center;
}

/* ---------- Popview window ---------- */

.popview {
  position: absolute;
  left: 71px;
  top: 310px;
  width: 561px;
  display: flex;
  flex-direction: column;
  padding: 0 4px 4px 5px;
  border: 1px solid #a9aeb2;
  border-radius: 7px;
  background: linear-gradient(to right, #b4d0dcd0 0 60px, #9fe0d8c0 90px, #10181cb0 106px, #0a0e10c0 60%, #53575a90);
  backdrop-filter: blur(3px);
  box-shadow: 0 0 6px 2px #0008;
}

.pop-title {
  display: flex;
  align-items: center;
  gap: 5px;
  height: 27px;
  padding-left: 1px;
}

.pop-title button {
  align-self: flex-start;
  display: flex;
  align-items: center;
  justify-content: center;
  width: 48px;
  height: 19px;
  margin-left: auto;
  border: 1px solid #a0a4a6;
  border-top: 0;
  border-radius: 0 0 5px 5px;
  background: #4448;
}

.pop-inner {
  border: 1px solid #9aa;
  background: #000;
  font-family: "Liberation Mono", monospace;
}

.pop-main {
  display: flex;
  height: 351px;
}

.pop-canvas {
  flex: 1;
  border: 3px solid #2f6e63;
  border-right-color: #b5e8dc;
  border-bottom-color: #b5e8dc;
  background: #000;
}

.pop-tools {
  display: flex;
  flex-direction: column;
  gap: 1px;
  width: 36px;
  margin-right: 1px;
  padding-top: 2px;
  background: linear-gradient(#000 247px, #55cfb0 247px);
  border-left: 1px solid #000;
}

.pop-tools button {
  display: flex;
  align-items: center;
  justify-content: center;
  width: 34px;
  height: 34px;
  background: #9cdbdb;
  border: 2px solid #55b09b;
  box-shadow: inset 2px 2px #c9f6f6, inset -2px -2px #4f8080;
}

.pop-tools svg {
  width: 21px;
  height: 21px;
  fill: none;
  stroke: #000;
}

.pop-close {
  padding: 2px;
  border-top: 1px solid #000;
  background: #55b09b;
}

.pop-close button {
  width: 100%;
  height: 25px;
  background: #9cdbdb;
  border: 2px solid;
  border-color: #c9f6f6 #4f8080 #4f8080 #c9f6f6;
  font-size: 15px;
  line-height: 20px;
}

/* ---------- Acrobat window ---------- */

.acrobat {
  position: absolute;
  left: 694px;
  right: 0;
  top: 13px;
  bottom: 119px;
  display: flex;
  flex-direction: column;
  padding: 0 7px 6px 6px;
  border: 1px solid #1b2a33;
  border-radius: 7px;
  background:
    linear-gradient(#78b8d4a0, #8fbcd0a0) top / 100% 28px no-repeat,
    linear-gradient(#9ab8c4 60px, #c4ccd0 190px, #10171c 200px) left / 7px 100% no-repeat,
    linear-gradient(#9cc8d8, #a8b0bc 20%, #4a95a0) right / 7px 100% no-repeat,
    linear-gradient(to right, #10171c 75%, #4a95a0) bottom / 100% 7px no-repeat;
  backdrop-filter: blur(2px);
  box-shadow: inset 0 0 0 1px #e5f2f8b0, 0 0 6px 2px #0008;
}

.acro-title {
  display: flex;
  align-items: center;
  gap: 5px;
  height: 27px;
}

.acro-title h1 {
  margin: 0;
  font-size: 12px;
  font-weight: normal;
}

.caption {
  display: flex;
  align-self: flex-start;
  margin-left: auto;
  border: 1px solid #345;
  border-top: 0;
  border-radius: 0 0 4px 4px;
  overflow: hidden;
}

.caption button {
  display: flex;
  align-items: center;
  justify-content: center;
  width: 27px;
  height: 17px;
  border-right: 1px solid #456;
  background: linear-gradient(#c5dae6, #8fb4c9 50%, #7aa6c0 51%, #a5cadb);
}

.caption .red {
  width: 46px;
  border-right: 0;
  background: linear-gradient(#e0a396, #cc5a45 50%, #b32a14 51%, #d4603c);
}

.acro-inner {
  flex: 1;
  min-height: 0;
  display: flex;
  flex-direction: column;
  border: 1px solid #444;
  border-right-color: #777;
  background: #e4e4e4;
}

.acro-menu {
  display: flex;
  align-items: center;
  gap: 15px;
  height: 20px;
  padding: 0 7px 0 6px;
  background: #dedede;
}

.acro-menu .doc-close {
  margin-left: auto;
}

.bar {
  display: flex;
  align-items: center;
  height: 38px;
  padding-left: 3px;
  border-top: 1px solid #6e6e6e;
  background: linear-gradient(#e2e2e2, #c8c8c8);
  box-shadow: inset 0 1px #f4f4f4;
}

.bar.tasks, .bar.find {
  height: 37px;
}

.bar.tasks {
  background: linear-gradient(#f0f0f0, #d8d8d8);
}

.bar button {
  display: flex;
  align-items: center;
  justify-content: center;
}

.bar b {
  border: 3px solid transparent;
  border-top-color: #000;
  border-bottom: 0;
}

.grip {
  width: 3px;
  height: 22px;
  border: 1px dotted #999;
  border-width: 0 1px;
}

.tasks {
  gap: 12px;
}

.tasks .grip {
  margin-right: -4px;
}

.tasks button {
  gap: 5px;
  white-space: nowrap;
}

.tools .files, .tools .pages, .tools .zoom, .tools .select {
  display: flex;
  align-items: center;
}

.files {
  gap: 10px;
  margin: 0 10px 0 7px;
}

.files button {
  width: 26px;
}

.pages {
  gap: 9px;
  margin: 0 18px 0 8px;
}

.pages input {
  width: 27px;
  height: 23px;
  background: #f8f8f8;
  text-align: center;
}

.pages span {
  margin-left: -5px;
}

.select {
  gap: 4px;
  margin: 0 6px 0 4px;
}

.select button {
  width: 32px;
  height: 32px;
}

.select .active {
  border: 1px solid #b5b5b5;
  border-radius: 3px;
  background: #ececec;
}

.line {
  width: 1px;
  height: 22px;
  background: #f8f8f8;
  box-shadow: -1px 0 #aaa;
}

.zoom {
  gap: 10px;
  margin: 0 3px 0 9px;
}

.zoom select {
  appearance: none;
  width: 44px;
  height: 23px;
  padding-left: 3px;
  background: #f8f8f8;
}

.tools b + .grip {
  margin-left: 11px;
}

.find .grip {
  margin-right: 3px;
}

.find input {
  width: 117px;
  height: 23px;
  margin-right: 2px;
  padding-left: 3px;
  background: #f8f8f8;
  border: 1px solid #c0c0c0;
}

.find input::placeholder {
  color: #777;
}

.acro-body {
  flex: 1;
  min-height: 0;
  display: flex;
  border-top: 1px solid #6e6e6e;
}

.acro-side {
  display: flex;
  flex-direction: column;
  align-items: center;
  gap: 21px;
  width: 41px;
  padding: 15px 5px 10px 0;
  background: #333;
  border-right: 1px solid #111;
}

.acro-side span {
  flex: 1;
}

.doc {
  flex: 1;
  min-width: 0;
  display: flex;
  flex-direction: column;
}

.doc-row {
  flex: 1;
  min-height: 0;
  display: flex;
}

.page {
  flex: 1;
  min-width: 0;
  overflow: hidden;
  background: #fff;
  box-shadow: inset 0 4px #d4d4d4;
}

.dims {
  font: 14px "Liberation Mono", monospace;
}

.dwg-title {
  font: 300 25px "Noto Sans CJK SC", sans-serif;
}

.vscroll {
  display: flex;
  flex-direction: column;
  align-items: center;
  width: 17px;
  padding-bottom: 7px;
  background: #f0f0f0;
}

.vscroll .split {
  width: 100%;
  height: 8px;
  margin-bottom: 7px;
  background: #ddd;
  border-bottom: 1px solid #999;
}

.vscroll .thumb {
  display: flex;
  align-items: center;
  justify-content: center;
  width: 15px;
  height: 106px;
  margin: 87px 0 auto;
  border: 1px solid #979797;
  border-radius: 2px;
  background: linear-gradient(to right, #f5f5f5, #d0d0d4);
}

.hscroll {
  display: flex;
  align-items: center;
  height: 16px;
  padding: 0 23px 0 19px;
  background: #ececec;
}

.hscroll span {
  width: 131px;
  font-size: 11px;
  white-space: nowrap;
}

.hscroll .track {
  flex: 1;
  display: flex;
  justify-content: flex-end;
  padding-right: 53px;
}

.hscroll .thumb {
  display: flex;
  align-items: center;
  justify-content: center;
  width: 89px;
  height: 15px;
  border: 1px solid #979797;
  border-radius: 2px;
  background: linear-gradient(#f5f5f5, #d0d0d4);
}

/* ---------- Taskbar ---------- */

.taskbar {
  display: flex;
  align-items: stretch;
  height: 28px;
  padding-left: 8px;
  background: linear-gradient(to right, #2a6a92, #1d5f96 40%, #14406e 75%, #0f3762);
  color: #fff;
}

.start {
  z-index: 1;
  margin-top: -6px;
}

.dots {
  width: 8px;
  margin: 4px 11px 0 12px;
  border: 2px dotted #0a2440;
  border-width: 0 2px;
}

.apps {
  display: flex;
  gap: 4px;
  margin-left: 2px;
}

.apps button {
  display: flex;
  align-items: center;
  gap: 5px;
  width: 66px;
  padding: 3px 0 0 4px;
  border: 1px solid #86b2cf;
  border-bottom: 0;
  border-radius: 2px 2px 0 0;
  background: linear-gradient(160deg, #7fabc8, #3b7aa8 50%, #2a6497);
  box-shadow: 0 0 0 1px #123a5c;
  white-space: nowrap;
}

.apps .pinned {
  width: 35px;
  justify-content: center;
  padding-left: 0;
  border: 0;
  background: none;
  box-shadow: none;
}

.apps .current {
  background: linear-gradient(160deg, #d5e4ef, #8fb2ce 50%, #6c9ac0);
}

.stack {
  display: flex;
  margin-left: 2px;
}

.stack button {
  width: 68px;
}

.tray {
  flex: 1;
  display: flex;
  align-items: center;
  gap: 9px;
}

.tray .dots {
  align-self: stretch;
  margin-right: 0;
}

.tray time {
  margin: 3px 6px 0 10px;
}

.peek {
  align-self: stretch;
  width: 14px;
  margin-left: auto;
  border: 1px solid #6d8ba6;
  border-right: 0;
  background: linear-gradient(#7d97ad, #284d74);
}
```
